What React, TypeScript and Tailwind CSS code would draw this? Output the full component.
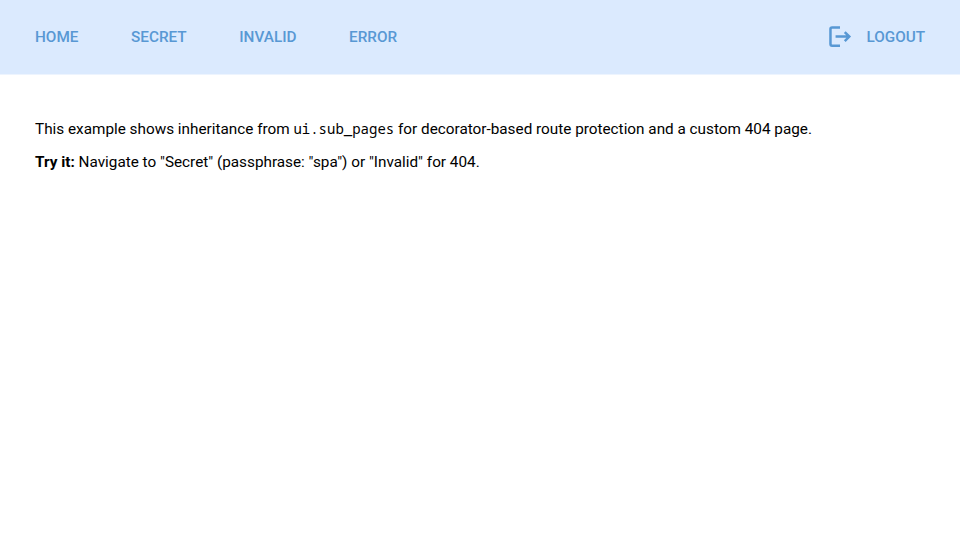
import React from "react";

const links = ["HOME", "SECRET", "INVALID", "ERROR"];

function LogoutIcon() {
  return (
    <svg viewBox="0 0 24 24" className="h-[26px] w-[26px] fill-none stroke-current" strokeWidth="2.3" aria-hidden="true">
      <path d="M12 3.2H4.7q-1.5 0-1.5 1.5v13.8q0 1.5 1.5 1.5H12" />
      <path d="M7.9 11.6h12.4M16.4 7.4l4.2 4.2-4.2 4.2" />
    </svg>
  );
}

export default function App() {
  return (
    <div className="h-screen w-full overflow-hidden bg-white font-[Roboto,sans-serif] text-black">
      <header className="flex h-[75px] items-center border-b border-[#edf4fe] bg-[#dbeafe] px-[35px] text-[15.3px] font-medium text-[#5898d4]">
        <nav className="flex gap-[52.6px]">
          {links.map((l) => (
            <a key={l}>{l}</a>
          ))}
        </nav>
        <a className="ml-auto flex items-center gap-[13px]">
          <LogoutIcon />
          <span>LOGOUT</span>
        </a>
      </header>
      <main className="px-[35px] pt-[42.2px] text-[15.3px] leading-[24px]">
        <p className="mb-[8.6px]">
          This example shows inheritance from{" "}
          <code className="font-['Noto_Sans_Mono','DejaVu_Sans_Mono',monospace] text-[14px]">ui.sub_pages</code> for
          decorator-based route protection and a custom 404 page.
        </p>
        <p>
          <strong className="font-bold">Try it:</strong> Navigate to "Secret" (passphrase: "spa") or "Invalid" for 404.
        </p>
      </main>
    </div>
  );
}
